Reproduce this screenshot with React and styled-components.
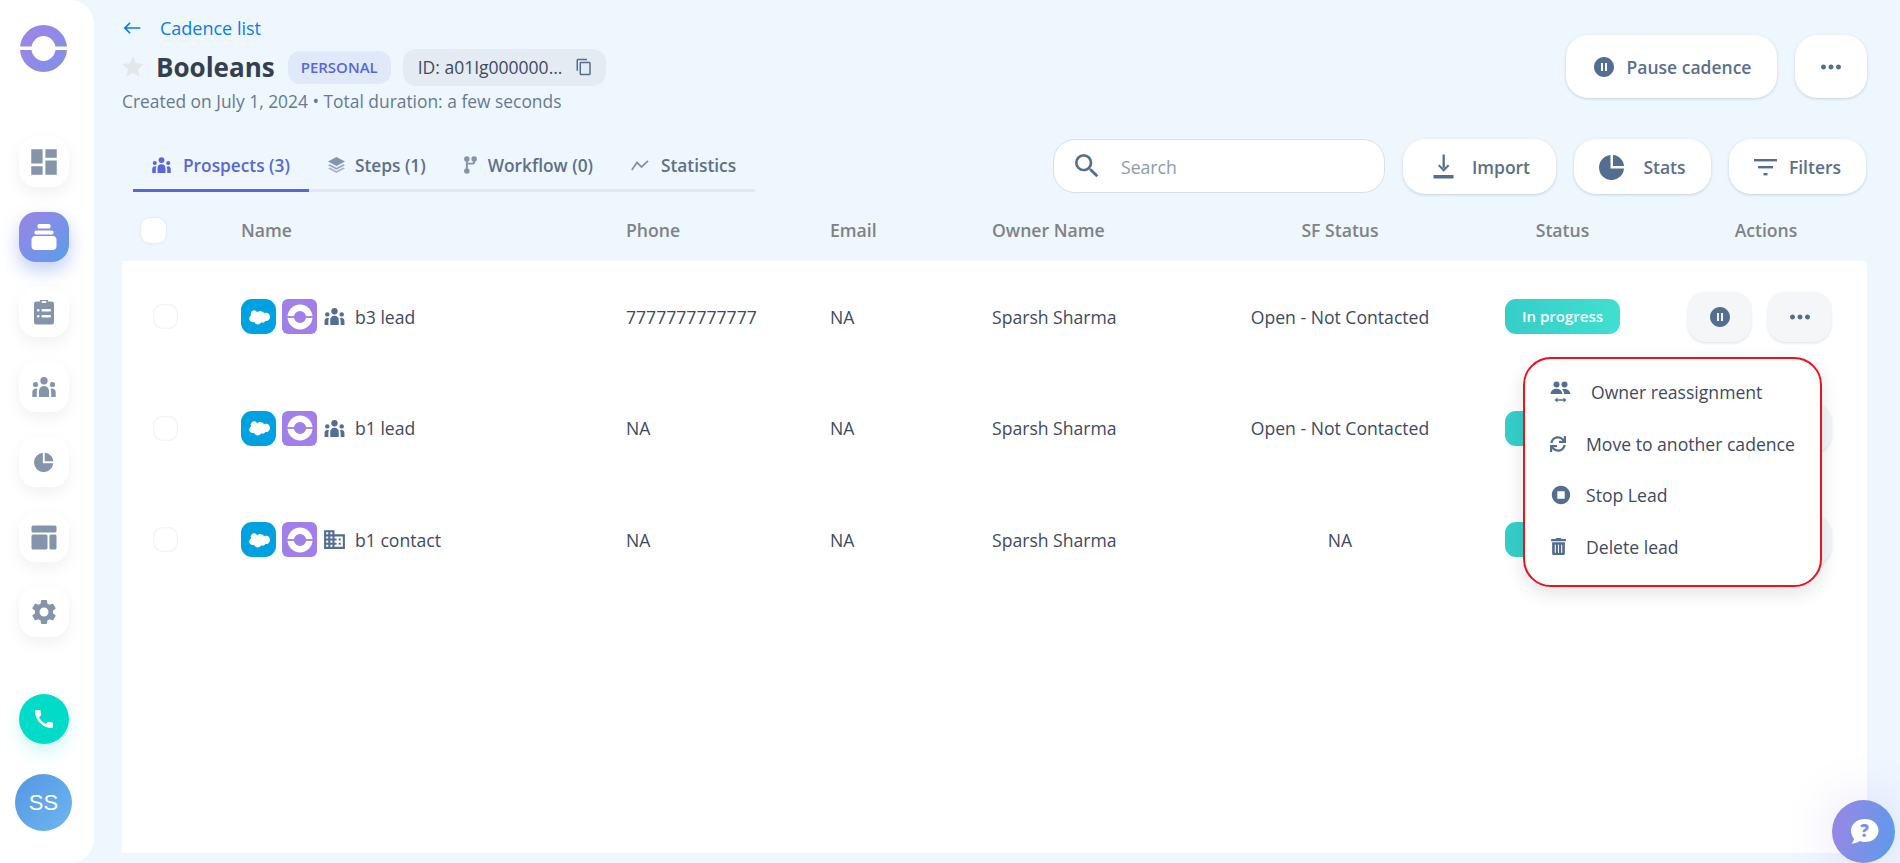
import styled, { createGlobalStyle } from "styled-components";
import {
  MdDashboard,
  MdSettings,
  MdCall,
  MdPauseCircle,
  MdMoreHoriz,
  MdSearch,
  MdStopCircle,
  MdDomain,
  MdContentCopy,
  MdStar,
  MdWest,
} from "react-icons/md";
import { FaSync, FaTrashAlt } from "react-icons/fa";

const SLATE = "#546e91";
const GRID = "119px 385px 204px 162px 228px 240px 205px 202px";

const GlobalStyle = createGlobalStyle`
  html, body { margin: 0; padding: 0; height: 100%; }
  body { background: #eef6fe; font-family: "Open Sans", "Noto Sans", sans-serif; overflow: hidden; }
  #root { height: 100vh; }
`;

const Page = styled.div`
  display: flex;
  height: 100vh;
  position: relative;
`;

// left navigation
const Sidebar = styled.nav`
  width: 94px;
  flex: none;
  background: #fff;
  border-radius: 0 24px 24px 0;
  display: flex;
  flex-direction: column;
  align-items: center;
  padding: 25px 7px 32px 0;
  box-sizing: border-box;
`;

const LogoWrap = styled.div`
  height: 47px;
  margin-bottom: 65px;
`;

const NavList = styled.div`
  display: flex;
  flex-direction: column;
  gap: 25px;
  flex: 1;
`;

const NavBtn = styled.div`
  width: 50px;
  height: 50px;
  border-radius: 17px;
  display: flex;
  align-items: center;
  justify-content: center;
  color: #8394ab;
  background: ${({ $active }) => ($active ? "linear-gradient(135deg, #9c84e6, #5b9de9)" : "#fff")};
  box-shadow: ${({ $active }) =>
    $active ? "0 8px 18px rgba(100, 130, 230, 0.4)" : "0 6px 16px rgba(0, 0, 0, 0.06)"};
`;

const CallBtn = styled.div`
  width: 50px;
  height: 50px;
  border-radius: 50%;
  background: #00dcc8;
  color: #fff;
  display: flex;
  align-items: center;
  justify-content: center;
  box-shadow: 0 8px 18px rgba(0, 220, 200, 0.2);
  margin-bottom: 30px;
`;

const Avatar = styled.div`
  width: 57px;
  height: 57px;
  border-radius: 50%;
  background: linear-gradient(135deg, #5497e4, #6eb6f0);
  color: #fff;
  display: flex;
  align-items: center;
  justify-content: center;
  font-family: "Liberation Sans", Arial, sans-serif;
  font-size: 22px;
`;

// main area
const Main = styled.main`
  flex: 1;
  min-width: 0;
  padding: 13px 33px 10px 28px;
  display: flex;
  flex-direction: column;
`;

const Header = styled.header`
  display: flex;
  justify-content: space-between;
  align-items: flex-start;
  height: 126px;
`;

const TitleCol = styled.div`
  display: flex;
  flex-direction: column;
`;

const BackLink = styled.a`
  display: flex;
  align-items: center;
  gap: 18px;
  color: #0a7cf3;
  font-size: 18px;
  line-height: 30px;
  height: 30px;
`;

const TitleRow = styled.div`
  display: flex;
  align-items: center;
  height: 38px;
  margin-top: 5px;
`;

const StarIcon = styled(MdStar)`
  color: #e4e6ea;
  font-size: 26px;
  margin-left: -2px;
  margin-right: 10px;
`;

const Title = styled.h1`
  margin: 0 13px 0 0;
  font-size: 26px;
  font-weight: 700;
  color: #333f52;
`;

const Badge = styled.span`
  background: #e0e9fa;
  color: #5a67d8;
  font-size: 15px;
  font-weight: 600;
  height: 33px;
  line-height: 33px;
  padding: 0 13px;
  border-radius: 12px;
  margin-right: 12px;
`;

const IdChip = styled.div`
  display: flex;
  align-items: center;
  gap: 13px;
  background: #e5ebf3;
  color: #3e4a5f;
  font-size: 17.5px;
  height: 37px;
  padding: 0 13px 0 15px;
  border-radius: 13px;
  svg {
    color: ${SLATE};
    font-size: 18px;
  }
`;

const SubText = styled.div`
  margin-top: 3px;
  font-size: 17.4px;
  line-height: 24px;
  color: #667a92;
`;

const HeaderActions = styled.div`
  display: flex;
  gap: 18px;
  margin-top: 22px;
`;

const PillBtn = styled.button`
  height: ${({ $h }) => $h || 55}px;
  width: ${({ $w }) => $w}px;
  border: none;
  background: #fff;
  border-radius: 22px;
  box-shadow: 0 1px 3px rgba(60, 80, 110, 0.22);
  display: flex;
  align-items: center;
  justify-content: center;
  gap: ${({ $gap }) => $gap || 10}px;
  font: inherit;
  font-size: 17.5px;
  font-weight: 600;
  color: #5a6f8c;
  padding: 0 0 0 ${({ $pl }) => $pl || 0}px;
  svg {
    color: ${SLATE};
    flex: none;
  }
`;

const Toolbar = styled.div`
  display: flex;
  justify-content: space-between;
  align-items: flex-end;
  height: 55px;
`;

const Tabs = styled.div`
  display: flex;
  margin: 0 0 2px 11px;
  border-bottom: 3px solid #e1e8f4;
  height: 48px;
  box-sizing: content-box;
`;

const Tab = styled.div`
  display: flex;
  align-items: center;
  gap: ${({ $gap }) => $gap || 12}px;
  padding: 0 19px 0 19px;
  margin-bottom: -3px;
  font-size: 17.3px;
  font-weight: 600;
  color: ${({ $active }) => ($active ? "#5a67d8" : "#5d7089")};
  border-bottom: 3px solid ${({ $active }) => ($active ? "#5a67d8" : "transparent")};
  svg {
    color: ${({ $active }) => ($active ? "#5a67d8" : "#8394ab")};
    flex: none;
  }
`;

const ToolGroup = styled.div`
  display: flex;
  gap: 18px;
  margin-right: 1px;
  align-self: flex-start;
`;

const SearchBox = styled.div`
  width: 332px;
  height: 54px;
  box-sizing: border-box;
  background: #fff;
  border: 1px solid #d8dfe8;
  border-radius: 22px;
  display: flex;
  align-items: center;
  gap: 18px;
  padding-left: 17px;
  color: ${SLATE};
`;

const SearchText = styled.span`
  font-size: 17.6px;
  color: #8a9bb0;
  padding-top: 1px;
`;

const HeadRow = styled.div`
  display: grid;
  grid-template-columns: ${GRID};
  height: 67px;
  box-sizing: border-box;
  padding-top: 5px;
  align-items: center;
  font-size: 17.6px;
  font-weight: 600;
  color: #7f8287;
`;

const HeadCell = styled.div`
  text-align: ${({ $center }) => ($center ? "center" : "left")};
`;

const CheckBox = styled.div`
  width: 25px;
  height: 25px;
  border-radius: 9px;
  background: #fff;
  box-shadow: ${({ $head }) => ($head ? "0 0 3px rgba(0,0,0,0.1)" : "inset 0 0 3px rgba(0,0,0,0.12)")};
  margin-left: ${({ $head }) => ($head ? 19 : 31)}px;
`;

const Panel = styled.section`
  flex: 1;
  background: #fff;
  position: relative;
`;

const Row = styled.div`
  display: grid;
  grid-template-columns: ${GRID};
  height: 111.5px;
  align-items: center;
  font-size: 17.6px;
  color: #3e4a5f;
`;

const Cell = styled.div`
  text-align: ${({ $center }) => ($center ? "center" : "left")};
`;

const NameCell = styled.div`
  display: flex;
  align-items: center;
  gap: 6px;
  svg {
    flex: none;
  }
`;

const SourceIcon = styled.div`
  width: 35px;
  height: 35px;
  border-radius: ${({ $round }) => ($round ? 11 : 6)}px;
  background: ${({ $bg }) => $bg};
  display: flex;
  align-items: center;
  justify-content: center;
  flex: none;
`;

const TypeIcon = styled.span`
  width: 22px;
  display: flex;
  justify-content: center;
  color: ${SLATE};
`;

const NameText = styled.span`
  margin-left: 4px;
`;

const StatusPill = styled.span`
  display: block;
  width: 115px;
  height: 35px;
  margin: 0 auto;
  line-height: 35px;
  border-radius: 11px;
  text-align: center;
  color: #fff;
  font-size: 15px;
  font-weight: 600;
  background: linear-gradient(90deg, #35cdc9, #40e0d0);
`;

const ActionCell = styled.div`
  display: flex;
  gap: 17px;
  padding-left: 23px;
`;

const RowBtn = styled.div`
  width: 63px;
  height: 50px;
  border-radius: 18px;
  background: #f5f6f8;
  box-shadow: 0 1px 3px rgba(60, 80, 110, 0.18);
  display: flex;
  align-items: center;
  justify-content: center;
  color: ${SLATE};
`;

// dropdown that sits over the rows
const Menu = styled.div`
  position: absolute;
  top: 96px;
  left: 1401px;
  width: 299px;
  height: 230px;
  box-sizing: border-box;
  background: #fff;
  border: 2px solid #e8131f;
  border-radius: 28px;
  box-shadow: 0 6px 18px rgba(40, 50, 70, 0.14);
  padding: 7px 0 0 25px;
  z-index: 5;
`;

const MenuItem = styled.div`
  display: flex;
  align-items: center;
  height: 51.7px;
  font-size: 17.6px;
  color: #3e4a5f;
`;

const MenuIcon = styled.span`
  width: ${({ $wide }) => ($wide ? 41 : 36)}px;
  display: flex;
  align-items: center;
  color: ${SLATE};
`;

const HelpBtn = styled.div`
  position: absolute;
  right: 5px;
  bottom: 0;
  width: 63px;
  height: 63px;
  border-radius: 50%;
  background: linear-gradient(100deg, #9c86e4, #5b9bea);
  box-shadow: 0 0 50px rgba(120, 110, 230, 0.2);
  display: flex;
  align-items: center;
  justify-content: center;
  z-index: 6;
`;

function SidebarLogo() {
  return (
    <svg width="47" height="47" viewBox="0 0 47 47">
      <defs>
        <linearGradient id="logoFill" x1="0" y1="0" x2="1" y2="1">
          <stop offset="0" stopColor="#a182e8" />
          <stop offset="1" stopColor="#7f92e6" />
        </linearGradient>
      </defs>
      <path
        fill="url(#logoFill)"
        fillRule="evenodd"
        d="M23.500 0a23.500 23.500 0 1 0 0 47a23.500 23.500 0 1 0 0-47zM23.500 11a12 12.500 0 1 1 0 25a12 12.500 0 1 1 0-25z"
      />
      <rect x="0" y="21.500" width="47" height="3.500" fill="#fff" />
    </svg>
  );
}

function SourceLogo() {
  return (
    <svg width="28" height="28" viewBox="0 0 46 46">
      <circle cx="23" cy="23" r="15.300" fill="none" stroke="#fff" strokeWidth="10.500" />
      <rect x="0" y="21.500" width="46" height="3" fill="#a080e8" />
    </svg>
  );
}

function PeopleIcon({ w, h }) {
  return (
    <svg width={w} height={h} viewBox="0 0 24 20" fill="currentColor">
      <circle cx="12" cy="3.800" r="3.700" />
      <circle cx="3.500" cy="7.500" r="2.600" />
      <circle cx="20.500" cy="7.500" r="2.600" />
      <path d="M7 20v-6a5 5 0 0 1 10 0v6z" />
      <path d="M0.300 20v-5a3.400 3.400 0 0 1 5.200-2.900 7 7 0 0 0-.7 2.900v5z" />
      <path d="M23.700 20v-5a3.400 3.400 0 0 0-5.200-2.900 7 7 0 0 1 .7 2.900v5z" />
    </svg>
  );
}

function PieIcon({ size }) {
  return (
    <svg width={size} height={size} viewBox="0 0 26 26" fill="currentColor">
      <path d="M11.500 1.100A12.500 12.500 0 1 0 25 14.500H11.500z" />
      <path d="M14 1c5.800.4 10.600 5.100 11 11H14z" />
    </svg>
  );
}

function LayersIcon() {
  return (
    <svg width="17" height="16" viewBox="0 0 17 16" fill="currentColor">
      <path d="M8.500 0L17 4.500 8.500 9 0 4.500z" />
      <path d="M1.800 7.300L0 8.300l8.500 4.500L17 8.300l-1.800-1-6.700 3.500z" opacity="0.8" />
      <path d="M1.800 10.500L0 11.500 8.500 16 17 11.500l-1.800-1-6.700 3.500z" opacity="0.65" />
    </svg>
  );
}

function TrendIcon() {
  return (
    <svg width="18" height="11" viewBox="0 0 18 11" fill="none" stroke="currentColor" strokeWidth="1.800">
      <path d="M0.800 10L6 2.500l4.500 4.500L17 0.800" />
    </svg>
  );
}

function CloudIcon() {
  return (
    <svg width="22" height="16" viewBox="0 0 28 20">
      <path
        fill="#fff"
        d="M11.500 4.200C12.500 3 14 2.300 15.600 2.300c2.100 0 4 1.200 4.900 2.900.8-.4 1.700-.5 2.500-.5 3 0 5 2.300 5 5.200s-2.200 5.300-5 5.300h-1c-.7 1.300-2.100 2-3.500 2-.6 0-1.200-.1-1.700-.4-.7 1.600-2.300 2.700-4.200 2.700-1.900 0-3.600-1.200-4.200-2.900-.3.100-.6.100-.9.100C3.700 16.700 1.600 14.700 1.600 12.100c0-1.700.9-3.200 2.300-4-.3-.6-.4-1.300-.4-2C3.500 3.500 5.600 1.500 8.100 1.500c1.400 0 2.600.9 3.400 2.700z"
      />
    </svg>
  );
}

function CadenceNavIcon() {
  return (
    <svg width="26" height="28" viewBox="0 0 26 28" fill="#fff">
      <rect x="6.500" y="1" width="13" height="4.500" rx="1.500" />
      <rect x="3.500" y="7.500" width="19" height="4" rx="1.500" />
      <rect x="0.500" y="13" width="25" height="14" rx="4" />
    </svg>
  );
}

function ClipboardIcon() {
  return (
    <svg width="24" height="26" viewBox="0 0 24 26">
      <path
        fill="#8394ab"
        d="M8 1h8v1.500h3.500A2.500 2.500 0 0 1 22 5v18a2.500 2.500 0 0 1-2.500 2.500h-15A2.500 2.500 0 0 1 2 23V5a2.500 2.500 0 0 1 2.500-2.500H8z"
      />
      <g fill="#fff">
        <rect x="9.500" y="2" width="5" height="2" rx="1" />
        <rect x="5" y="10" width="2.500" height="2.500" rx="1" />
        <rect x="9.500" y="10" width="9.500" height="2.500" rx="1" />
        <rect x="5" y="16" width="2.500" height="2.500" rx="1" />
        <rect x="9.500" y="16" width="9.500" height="2.500" rx="1" />
      </g>
    </svg>
  );
}

function TemplateIcon() {
  return (
    <svg width="26" height="25" viewBox="0 0 26 25" fill="#8394ab">
      <rect x="0.500" y="0.500" width="25" height="7" rx="1.500" />
      <rect x="0.500" y="9.500" width="16" height="15" rx="1.500" />
      <rect x="18.500" y="9.500" width="7" height="15" rx="1.500" />
    </svg>
  );
}

function WorkflowIcon() {
  return (
    <svg width="13" height="18" viewBox="0 0 16 22" fill="#8394ab">
      <circle cx="3.500" cy="3.500" r="3.400" />
      <circle cx="12.500" cy="3.500" r="3.400" />
      <circle cx="3.500" cy="18.500" r="3.400" />
      <rect x="2.300" y="3" width="2.400" height="15" />
      <path d="M11.300 5h2.400v2a3.500 3.500 0 0 1-3.500 3.500H4v-2.400h6.200a1.100 1.100 0 0 0 1.100-1.100z" />
    </svg>
  );
}

function ImportIcon() {
  return (
    <svg width="21" height="27" viewBox="0 0 22 27" fill={SLATE}>
      <rect x="10" y="1" width="2.400" height="14" />
      <path d="M11.200 19l-6-6.200 1.600-1.500 4.400 4.500 4.400-4.500 1.600 1.500z" />
      <rect x="0.500" y="22.500" width="21" height="3.500" rx="0.500" />
    </svg>
  );
}

function FilterIcon() {
  return (
    <svg width="23" height="18" viewBox="0 0 23 18" fill={SLATE}>
      <rect x="0" y="1" width="23" height="2.400" />
      <rect x="4" y="8" width="15" height="2.400" />
      <rect x="9.500" y="15" width="4" height="2.400" />
    </svg>
  );
}

function ReassignIcon() {
  return (
    <svg width="21" height="22" viewBox="0 0 21 22" fill={SLATE}>
      <circle cx="6.500" cy="3.500" r="3" />
      <circle cx="14.500" cy="3.500" r="3" />
      <path d="M0.500 13c.3-3.500 2.800-5.200 6-5.200s5.600 1.700 6 5.200z" />
      <path d="M13.800 7.800c3.400 0 6 1.800 6.700 5.200h-6.300c-.2-2-1-3.700-2.300-4.700.6-.3 1.200-.5 1.900-.5z" />
      <path d="M4.500 19l3-2.500v1.700h6v-1.700l3 2.500-3 2.500v-1.700h-6v1.700z" />
    </svg>
  );
}

function HelpBubble() {
  return (
    <svg width="30" height="27" viewBox="0 0 30 27">
      <path
        fill="#fff"
        d="M16 1c7.500 0 13.500 4.800 13.500 11.500S23.500 24 16 24c-2 0-3.800-.3-5.500-1-1.800 1.600-4.400 2.600-8 2.400 1.500-1.200 2.400-2.800 2.500-4.800C3 18.500 2 15.700 2 12.500 2 5.800 8.500 1 16 1z"
      />
      <text x="15.500" y="19" textAnchor="middle" fontFamily="Open Sans, sans-serif" fontWeight="800" fontSize="17" fill="#7f8fe6">
        ?
      </text>
    </svg>
  );
}

// the menu covers the status label of the last two rows
const ROWS = [
  { name: "b3 lead", phone: "7777777777777", sf: "Open - Not Contacted", type: "lead", status: "In progress" },
  { name: "b1 lead", phone: "NA", sf: "Open - Not Contacted", type: "lead", status: "" },
  { name: "b1 contact", phone: "NA", sf: "NA", type: "contact", status: "" },
];

export default function App() {
  return (
    <Page>
      <GlobalStyle />
      <Sidebar>
        <LogoWrap>
          <SidebarLogo />
        </LogoWrap>
        <NavList>
          <NavBtn>
            <MdDashboard size={34} />
          </NavBtn>
          <NavBtn $active>
            <CadenceNavIcon />
          </NavBtn>
          <NavBtn>
            <ClipboardIcon />
          </NavBtn>
          <NavBtn>
            <PeopleIcon w={24} h={20} />
          </NavBtn>
          <NavBtn>
            <PieIcon size={20} />
          </NavBtn>
          <NavBtn>
            <TemplateIcon />
          </NavBtn>
          <NavBtn>
            <MdSettings size={30} />
          </NavBtn>
        </NavList>
        <CallBtn>
          <MdCall size={24} />
        </CallBtn>
        <Avatar>SS</Avatar>
      </Sidebar>

      <Main>
        <Header>
          <TitleCol>
            <BackLink>
              <MdWest size={20} />
              Cadence list
            </BackLink>
            <TitleRow>
              <StarIcon />
              <Title>Booleans</Title>
              <Badge>PERSONAL</Badge>
              <IdChip>
                ID: a01Ig000000...
                <MdContentCopy />
              </IdChip>
            </TitleRow>
            <SubText>Created on July 1, 2024 • Total duration: a few seconds</SubText>
          </TitleCol>
          <HeaderActions>
            <PillBtn $w={211} $h={63} $gap={11}>
              <MdPauseCircle size={24} />
              Pause cadence
            </PillBtn>
            <PillBtn $w={72} $h={63}>
              <MdMoreHoriz size={30} />
            </PillBtn>
          </HeaderActions>
        </Header>

        <Toolbar>
          <Tabs>
            <Tab $active>
              <PeopleIcon w={19} h={16} />
              Prospects (3)
            </Tab>
            <Tab $gap={10}>
              <LayersIcon />
              Steps (1)
            </Tab>
            <Tab $gap={11}>
              <WorkflowIcon />
              Workflow (0)
            </Tab>
            <Tab>
              <TrendIcon />
              Statistics
            </Tab>
          </Tabs>
          <ToolGroup>
            <SearchBox>
              <MdSearch size={32} />
              <SearchText>Search</SearchText>
            </SearchBox>
            <PillBtn $w={153} $gap={18} $pl={4}>
              <ImportIcon />
              Import
            </PillBtn>
            <PillBtn $w={137} $gap={18}>
              <PieIcon size={26} />
              Stats
            </PillBtn>
            <PillBtn $w={137} $gap={12}>
              <FilterIcon />
              Filters
            </PillBtn>
          </ToolGroup>
        </Toolbar>

        <HeadRow>
          <CheckBox $head />
          <HeadCell>Name</HeadCell>
          <HeadCell>Phone</HeadCell>
          <HeadCell>Email</HeadCell>
          <HeadCell>Owner Name</HeadCell>
          <HeadCell $center>SF Status</HeadCell>
          <HeadCell $center>Status</HeadCell>
          <HeadCell $center>Actions</HeadCell>
        </HeadRow>

        <Panel>
          {ROWS.map((row) => (
            <Row key={row.name}>
              <CheckBox />
              <NameCell>
                <SourceIcon $bg="#00a1e0" $round>
                  <CloudIcon />
                </SourceIcon>
                <SourceIcon $bg="#a080e8">
                  <SourceLogo />
                </SourceIcon>
                <TypeIcon>
                  {row.type === "lead" ? <PeopleIcon w={21} h={17} /> : <MdDomain size={25} />}
                </TypeIcon>
                <NameText>{row.name}</NameText>
              </NameCell>
              <Cell>{row.phone}</Cell>
              <Cell>NA</Cell>
              <Cell>Sparsh Sharma</Cell>
              <Cell $center>{row.sf}</Cell>
              <Cell $center>
                <StatusPill>{row.status}</StatusPill>
              </Cell>
              <ActionCell>
                <RowBtn>
                  <MdPauseCircle size={24} />
                </RowBtn>
                <RowBtn>
                  <MdMoreHoriz size={30} />
                </RowBtn>
              </ActionCell>
            </Row>
          ))}
          <Menu>
            <MenuItem>
              <MenuIcon $wide>
                <ReassignIcon />
              </MenuIcon>
              Owner reassignment
            </MenuItem>
            <MenuItem>
              <MenuIcon>
                <FaSync size={16} />
              </MenuIcon>
              Move to another cadence
            </MenuItem>
            <MenuItem>
              <MenuIcon>
                <MdStopCircle size={22} />
              </MenuIcon>
              Stop Lead
            </MenuItem>
            <MenuItem>
              <MenuIcon>
                <FaTrashAlt size={17} />
              </MenuIcon>
              Delete lead
            </MenuItem>
          </Menu>
        </Panel>
      </Main>

      <HelpBtn>
        <HelpBubble />
      </HelpBtn>
    </Page>
  );
}
